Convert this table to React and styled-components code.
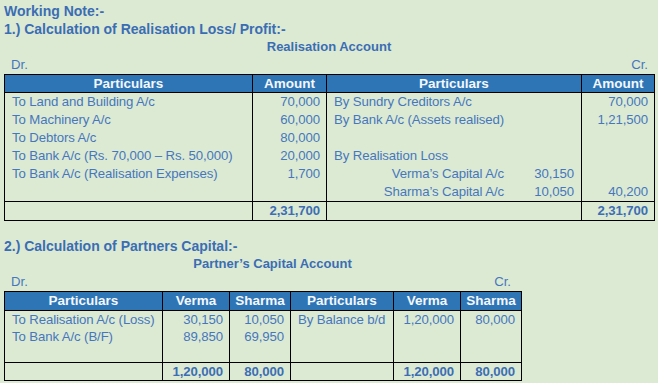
import React from "react";
import styled, { createGlobalStyle } from "styled-components";

const Global = createGlobalStyle`
  html, body {
    margin: 0;
    padding: 0;
    background: #dcead3;
  }
  body {
    font-family: "Liberation Sans", Arial, sans-serif;
  }
`;

const Page = styled.div`
  width: 658px;
  height: 383px;
  padding: 2px 4px 0 4px;
  box-sizing: border-box;
  background: #dcead3;
  color: #4677bd;
  font-size: 13.2px;
  overflow: hidden;
`;

const Heading = styled.div`
  height: 18px;
  line-height: 18px;
  font-size: 14px;
  font-weight: bold;
  color: #3b6db3;
  margin-top: ${(p) => p.$gap || 0}px;
`;

const Title = styled.div`
  width: ${(p) => p.$width}px;
  height: 18px;
  line-height: 18px;
  text-align: center;
  font-size: 13px;
  font-weight: bold;
  color: #3b6db3;
  padding-left: ${(p) => p.$shift || 0}px;
  box-sizing: border-box;
`;

const DrCr = styled.div`
  width: ${(p) => p.$width}px;
  height: 18px;
  line-height: 18px;
  display: flex;
  justify-content: space-between;
  padding: 0 ${(p) => p.$right || 6}px 0 7px;
  box-sizing: border-box;
`;

const Table = styled.table`
  width: ${(p) => p.$width}px;
  border-collapse: collapse;
  table-layout: fixed;
  border: 1.5px solid #000;
`;

const Th = styled.th`
  background: #2e75b6;
  color: #f4f7fc;
  font-size: 13.5px;
  font-weight: bold;
  text-align: center;
  height: ${(p) => p.$h || 17}px;
  padding: 0;
  border: 1.5px solid #000;
  line-height: 16px;
`;

const Td = styled.td`
  height: ${(p) => p.$h || 18}px;
  padding: 0 ${(p) => (p.$num ? 6 : 7)}px;
  text-align: ${(p) => (p.$num ? "right" : "left")};
  border-left: 1.5px solid #000;
  border-right: 1.5px solid #000;
  white-space: nowrap;
  line-height: 16px;
  letter-spacing: -0.1px;
  vertical-align: middle;
`;

const TotalCell = styled(Td)`
  border-top: 1.5px solid #000;
  font-weight: bold;
  color: #3d6eb3;
`;

const Split = styled.div`
  display: flex;
  justify-content: flex-end;
`;

const SplitName = styled.span`
  margin-right: 20px;
`;

const SplitVal = styled.span`
  width: 50px;
  text-align: right;
`;

const realisation = [
  ["To Land and Building A/c", "70,000", "By Sundry Creditors A/c", "70,000"],
  ["To Machinery A/c", "60,000", "By Bank A/c (Assets realised)", "1,21,500"],
  ["To Debtors A/c", "80,000", "", ""],
  ["To Bank A/c (Rs. 70,000 – Rs. 50,000)", "20,000", "By Realisation Loss", ""],
  ["To Bank A/c (Realisation Expenses)", "1,700", { name: "Verma’s Capital A/c", val: "30,150" }, ""],
  ["", "", { name: "Sharma’s Capital A/c", val: "10,050" }, "40,200"],
];

const capital = [
  ["To Realisation A/c (Loss)", "30,150", "10,050", "By Balance b/d", "1,20,000", "80,000"],
  ["To Bank A/c (B/F)", "89,850", "69,950", "", "", ""],
  ["", "", "", "", "", ""],
];

function Particular({ value }) {
  if (typeof value === "object") {
    return (
      <Split>
        <SplitName>{value.name}</SplitName>
        <SplitVal>{value.val}</SplitVal>
      </Split>
    );
  }
  return value;
}

export default function App() {
  return (
    <>
      <Global />
      <Page>
        <Heading>Working Note:-</Heading>
        <Heading>1.) Calculation of Realisation Loss/ Profit:-</Heading>
        <Title $width={650}>Realisation Account</Title>
        <DrCr $width={650}>
          <span>Dr.</span>
          <span>Cr.</span>
        </DrCr>
        <Table $width={650}>
          <colgroup>
            <col style={{ width: 248 }} />
            <col style={{ width: 74 }} />
            <col style={{ width: 255 }} />
            <col style={{ width: 73 }} />
          </colgroup>
          <thead>
            <tr>
              <Th>Particulars</Th>
              <Th>Amount</Th>
              <Th>Particulars</Th>
              <Th>Amount</Th>
            </tr>
          </thead>
          <tbody>
            {realisation.map((r, i) => (
              <tr key={i}>
                <Td>{r[0]}</Td>
                <Td $num>{r[1]}</Td>
                <Td>
                  <Particular value={r[2]} />
                </Td>
                <Td $num>{r[3]}</Td>
              </tr>
            ))}
            <tr>
              <TotalCell />
              <TotalCell $num>2,31,700</TotalCell>
              <TotalCell />
              <TotalCell $num>2,31,700</TotalCell>
            </tr>
          </tbody>
        </Table>

        <Heading $gap={16}>2.) Calculation of Partners Capital:-</Heading>
        <Title $width={517} $shift={20}>Partner’s Capital Account</Title>
        <DrCr $width={517} $right={10}>
          <span>Dr.</span>
          <span>Cr.</span>
        </DrCr>
        <Table $width={517}>
          <colgroup>
            <col style={{ width: 158 }} />
            <col style={{ width: 67 }} />
            <col style={{ width: 61 }} />
            <col style={{ width: 103 }} />
            <col style={{ width: 67 }} />
            <col style={{ width: 61 }} />
          </colgroup>
          <thead>
            <tr>
              <Th $h={18}>Particulars</Th>
              <Th $h={18}>Verma</Th>
              <Th $h={18}>Sharma</Th>
              <Th $h={18}>Particulars</Th>
              <Th $h={18}>Verma</Th>
              <Th $h={18}>Sharma</Th>
            </tr>
          </thead>
          <tbody>
            {capital.map((r, i) => (
              <tr key={i}>
                <Td $h={17}>{r[0]}</Td>
                <Td $h={17} $num>{r[1]}</Td>
                <Td $h={17} $num>{r[2]}</Td>
                <Td $h={17}>{r[3]}</Td>
                <Td $h={17} $num>{r[4]}</Td>
                <Td $h={17} $num>{r[5]}</Td>
              </tr>
            ))}
            <tr>
              <TotalCell $h={17} />
              <TotalCell $h={17} $num>1,20,000</TotalCell>
              <TotalCell $h={17} $num>80,000</TotalCell>
              <TotalCell $h={17} />
              <TotalCell $h={17} $num>1,20,000</TotalCell>
              <TotalCell $h={17} $num>80,000</TotalCell>
            </tr>
          </tbody>
        </Table>
      </Page>
    </>
  );
}
